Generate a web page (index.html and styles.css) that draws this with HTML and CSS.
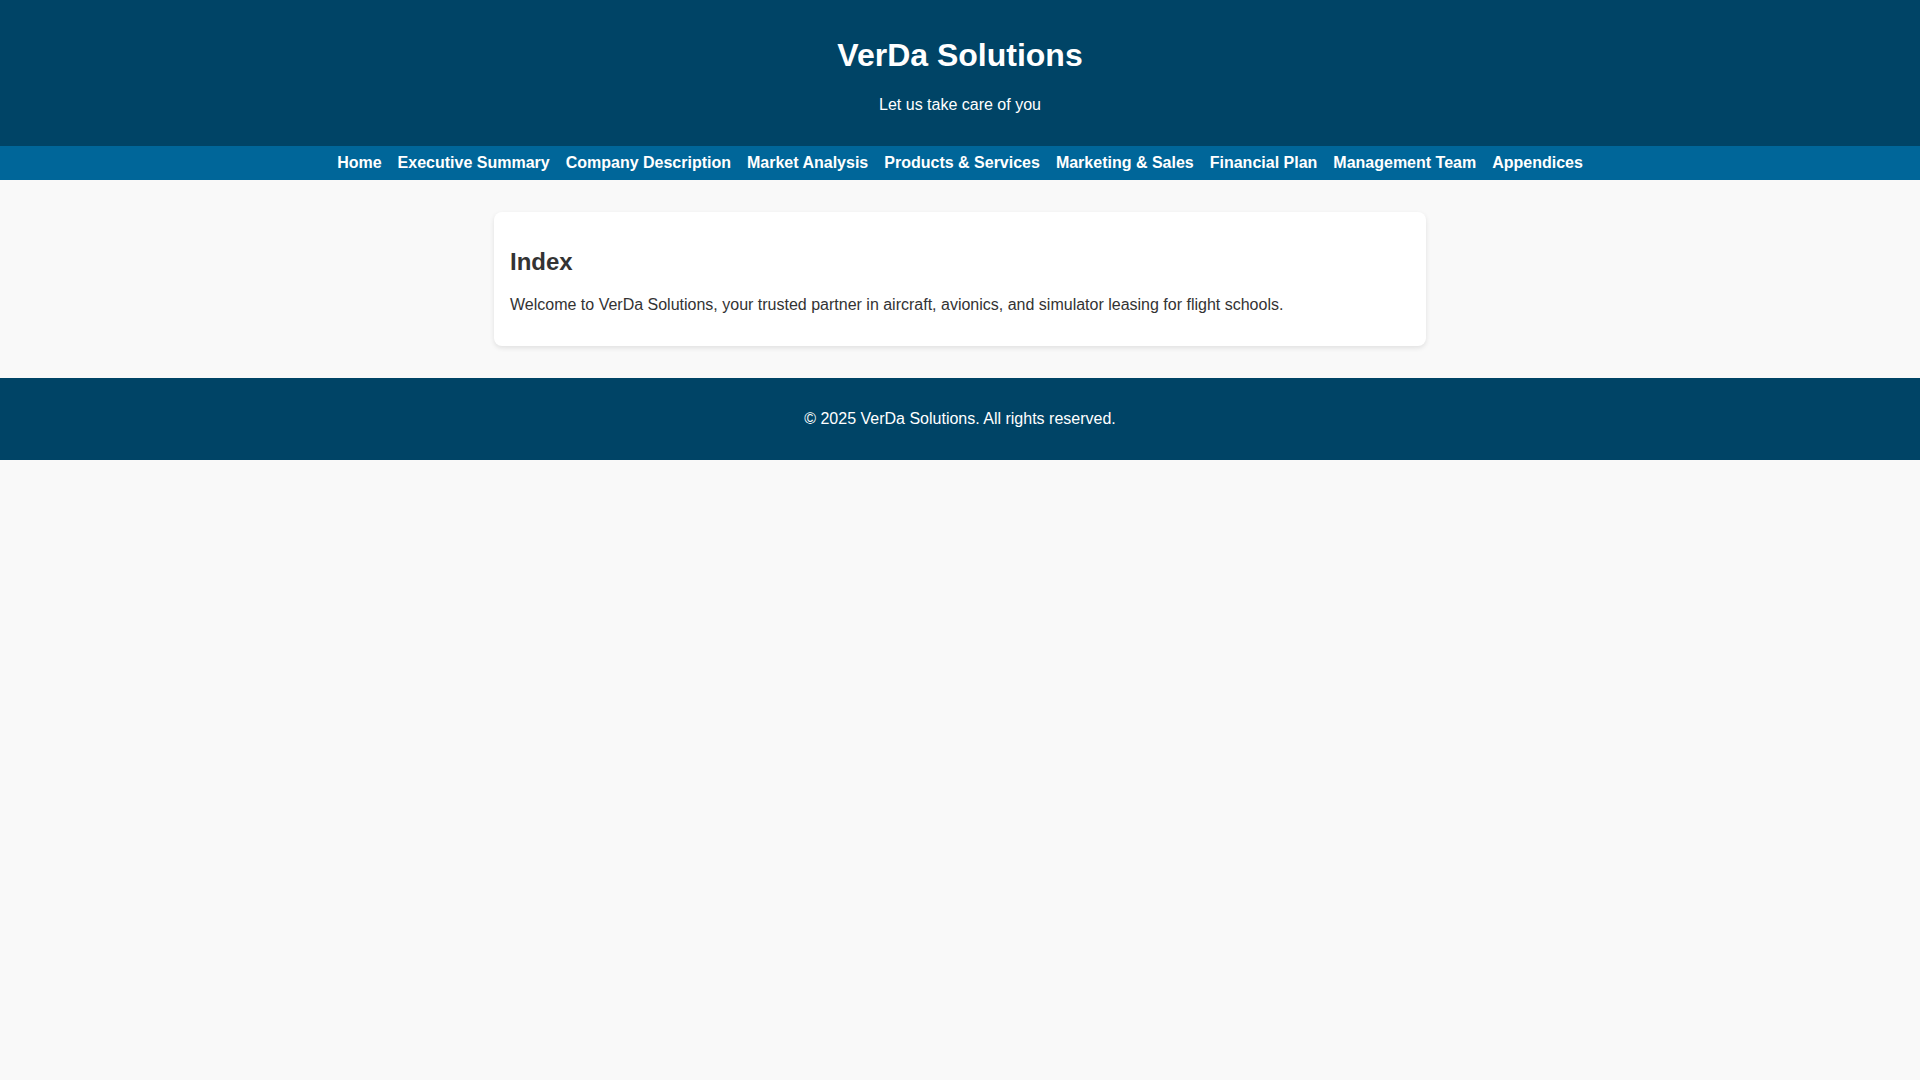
FILE: index.html
```html
<!DOCTYPE html>
<html lang="en">
<head>
<meta charset="utf-8">
<title>VerDa Solutions</title>
<link rel="stylesheet" href="styles.css">
</head>
<body>
<header class="site-header">
  <h1>VerDa Solutions</h1>
  <p>Let us take care of you</p>
</header>
<nav class="site-nav">
  <a href="#">Home</a>
  <a href="#">Executive Summary</a>
  <a href="#">Company Description</a>
  <a href="#">Market Analysis</a>
  <a href="#">Products &amp; Services</a>
  <a href="#">Marketing &amp; Sales</a>
  <a href="#">Financial Plan</a>
  <a href="#">Management Team</a>
  <a href="#">Appendices</a>
</nav>
<main class="content">
  <section class="card">
    <h2>Index</h2>
    <p>Welcome to VerDa Solutions, your trusted partner in aircraft, avionics, and simulator leasing for flight schools.</p>
  </section>
</main>
<footer class="site-footer">
  <p>&copy; 2025 VerDa Solutions. All rights reserved.</p>
</footer>
</body>
</html>
```
FILE: styles.css
```css
body {
  margin: 0;
  font-family: "Liberation Sans", Arial, sans-serif;
  background: #f9f9f9;
  color: #333;
}

.site-header {
  background: #004466;
  color: #fff;
  text-align: center;
  padding: 1rem;
}

.site-header h1 {
  font-size: 2em;
  margin: 0.67em 0;
}

.site-header p {
  margin: 1em 0;
}

.site-nav {
  background: #006699;
  display: flex;
  justify-content: center;
  gap: 16px;
  padding: 0.5rem;
}

.site-nav a {
  color: #fff;
  font-weight: bold;
  text-decoration: none;
}

.content {
  padding: 2rem 1rem;
}

.card {
  max-width: 900px;
  margin: 0 auto;
  background: #fff;
  padding: 1rem;
  border-radius: 8px;
  box-shadow: 0 2px 5px rgba(0, 0, 0, 0.1);
}

.card h2 {
  font-size: 1.5em;
  margin: 0.83em 0;
}

.card p {
  margin: 1em 0;
}

.site-footer {
  background: #004466;
  color: #fff;
  text-align: center;
  padding: 1rem;
}

.site-footer p {
  margin: 1em 0;
}
```
